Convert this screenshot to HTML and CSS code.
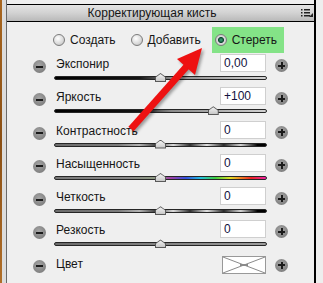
FILE: index.html
```html
<!DOCTYPE html>
<html lang="ru">
<head>
    <meta charset="UTF-8">
    <meta name="viewport" content="width=device-width, initial-scale=1.0">
    <title>Корректирующая кисть</title>
    <link rel="stylesheet" href="styles.css">
</head>
<body>
    <div class="frame">
        <div class="wood"></div>
        <div class="gutter"></div>
        <div class="panel">
            <div class="header">
                <div class="title">Корректирующая кисть</div>
                <div class="menu">
                    <svg width="12" height="8" viewBox="0 0 12 8">
                        <rect x="0" y="0" width="1.5" height="1.5" fill="#222"/>
                        <rect x="3" y="0" width="6" height="1.5" fill="#222"/>
                        <rect x="0" y="3" width="1.5" height="1.5" fill="#222"/>
                        <rect x="3" y="3" width="6" height="1.5" fill="#222"/>
                        <rect x="0" y="6" width="1.5" height="1.5" fill="#222"/>
                        <rect x="3" y="6" width="6" height="1.5" fill="#222"/>
                        <polygon points="12,4 12,8 8,8" fill="#222"/>
                    </svg>
                </div>
            </div>

            <div class="modes">
                <label class="mode"><span class="radio"></span>Создать</label>
                <label class="mode"><span class="radio"></span>Добавить</label>
                <label class="mode active"><span class="radio on"></span>Стереть</label>
            </div>

            <div class="rows">
                <div class="row">
                    <span class="round minus"></span>
                    <div class="control">
                        <div class="top"><span class="name">Экспонир</span><span class="value">0,00</span></div>
                        <div class="track tone"><span class="thumb" style="left: 50%"></span></div>
                    </div>
                    <span class="round plus"></span>
                </div>
                <div class="row">
                    <span class="round minus"></span>
                    <div class="control">
                        <div class="top"><span class="name">Яркость</span><span class="value">+100</span></div>
                        <div class="track tone"><span class="thumb" style="left: 75%"></span></div>
                    </div>
                    <span class="round plus"></span>
                </div>
                <div class="row">
                    <span class="round minus"></span>
                    <div class="control">
                        <div class="top"><span class="name">Контрастность</span><span class="value">0</span></div>
                        <div class="track bands"><span class="thumb" style="left: 50%"></span></div>
                    </div>
                    <span class="round plus"></span>
                </div>
                <div class="row">
                    <span class="round minus"></span>
                    <div class="control">
                        <div class="top"><span class="name">Насыщенность</span><span class="value">0</span></div>
                        <div class="track rainbow"><span class="thumb" style="left: 50%"></span></div>
                    </div>
                    <span class="round plus"></span>
                </div>
                <div class="row">
                    <span class="round minus"></span>
                    <div class="control">
                        <div class="top"><span class="name">Четкость</span><span class="value">0</span></div>
                        <div class="track bands"><span class="thumb" style="left: 50%"></span></div>
                    </div>
                    <span class="round plus"></span>
                </div>
                <div class="row">
                    <span class="round minus"></span>
                    <div class="control">
                        <div class="top"><span class="name">Резкость</span><span class="value">0</span></div>
                        <div class="track plain"><span class="thumb" style="left: 50%"></span></div>
                    </div>
                    <span class="round plus"></span>
                </div>
                <div class="row">
                    <span class="round minus"></span>
                    <div class="control">
                        <div class="top"><span class="name">Цвет</span>
                            <span class="swatch">
                                <svg width="44" height="18" viewBox="0 0 44 18">
                                    <rect x="0.5" y="0.5" width="43" height="17" fill="#fff" stroke="#999"/>
                                    <line x1="1" y1="1" x2="43" y2="17" stroke="#8a8a8a" stroke-width="1"/>
                                    <line x1="1" y1="17" x2="43" y2="1" stroke="#8a8a8a" stroke-width="1"/>
                                    <rect x="18" y="8" width="8" height="2" fill="#8a8a8a"/>
                                </svg>
                            </span>
                        </div>
                    </div>
                    <span class="round plus"></span>
                </div>
            </div>
        </div>
        <div class="edge"></div>
    </div>

    <svg class="arrow" width="323" height="283" viewBox="0 0 323 283">
        <line x1="131" y1="129" x2="187" y2="66" stroke="#ee1111" stroke-width="7"/>
        <polygon points="202,48 195,75 177,59" fill="#ee1111"/>
    </svg>
</body>
</html>
```

FILE: styles.css
```css
body {
    margin: 0;
    padding: 0;
    background-color: #efefef;
    font-family: "Liberation Sans", Arial, sans-serif;
    font-size: 12px;
    color: #161616;
}
.frame {
    display: flex;
    height: 283px;
}
.wood {
    width: 2px;
    background: linear-gradient(#a8661f, #8a4f14 50%, #b06e28);
}
.gutter {
    width: 4px;
    background-color: #dcdcdc;
}
.panel {
    flex: 1;
    border-left: 1px solid #6a6a6a;
    border-right: 2px solid #000;
    background-color: #efefef;
    padding-top: 4px;
}
.edge {
    width: 7px;
    background-color: #eeeeee;
}
.header {
    display: flex;
    align-items: center;
    height: 16px;
    border-top: 1px solid #000;
    border-bottom: 1px solid #000;
    background: linear-gradient(#e4e4e4, #d2d2d2 50%, #b9b9b9);
}
.title {
    flex: 1;
    text-align: center;
    line-height: 16px;
}
.menu {
    width: 17px;
    display: flex;
    padding-left: 4px;
    box-sizing: border-box;
}
.modes {
    display: flex;
    height: 32px;
    padding-top: 5px;
    padding-left: 46px;
    box-sizing: border-box;
}
.mode {
    display: flex;
    align-items: center;
    height: 26px;
    margin-right: 15px;
}
.mode.active {
    margin-left: -4px;
    padding: 0 7px 0 3px;
    background-color: #84e387;
}
.radio {
    width: 10px;
    height: 10px;
    border: 1px solid #7c7c7c;
    border-radius: 50%;
    margin-right: 5px;
    background: radial-gradient(circle at 40% 35%, #ffffff, #d8d8d8 60%, #b4b4b4);
}
.radio.on {
    background: radial-gradient(circle, #3aa87c 0, #0e4a2e 2.6px, #dadada 3.4px, #bdbdbd 100%);
}
.rows {
    padding: 0 26px;
}
.row {
    display: grid;
    grid-template-columns: 13px 1fr 13px;
    column-gap: 8px;
    height: 33.3px;
}
.round {
    position: relative;
    width: 13px;
    height: 13px;
    margin-top: 6px;
    border-radius: 50%;
    background: radial-gradient(circle at 45% 40%, #a6a6a6, #848484 65%, #6e6e6e);
}
.round.plus {
    margin-top: 5px;
}
.round::before {
    content: "";
    position: absolute;
    left: 3px;
    top: 5.5px;
    width: 7px;
    height: 2px;
    background-color: #1b1b1b;
}
.round.plus::after {
    content: "";
    position: absolute;
    left: 5.5px;
    top: 3px;
    width: 2px;
    height: 7px;
    background-color: #1b1b1b;
}
.top {
    display: flex;
    justify-content: space-between;
    align-items: flex-start;
    height: 18px;
    padding-right: 1px;
}
.name {
    padding: 3px 0 0 2px;
    line-height: 14px;
}
.value {
    width: 41px;
    height: 16px;
    padding-left: 3px;
    line-height: 17px;
    border: 1px solid #cfcfcf;
    background-color: #fff;
    color: #12123e;
}
.swatch {
    display: flex;
    margin-top: 2px;
}
.track {
    position: relative;
    height: 2px;
    margin-top: 4px;
    border: 1px solid #262626;
    border-radius: 2px;
}
.tone {
    background: linear-gradient(90deg, #000, #141414 40%, #8a8a8a 55%, #d2d2d2);
}
.bands {
    background: linear-gradient(90deg, #6c6c6c, #7c7c7c 30%, #b4b4b4 40%, #3c3c3c 48%, #dcdcdc 56%, #303030 64%, #e2e2e2 72%, #2a2a2a 80%, #d4d4d4 88%, #000 96%);
}
.rainbow {
    background: linear-gradient(90deg, #777, #8a8a8a 35%, #8e9a82 47%, #a040a8 55%, #3450e0 62%, #22c0e2 69%, #3ed040 76%, #e2e022 83%, #f28020 88%, #f02222 93%, #f022a8);
}
.plain {
    background: linear-gradient(90deg, #6a6a6a, #9c9c9c);
}
.thumb {
    position: absolute;
    top: -4px;
    width: 11px;
    height: 9px;
    margin-left: -5.5px;
    background: #5a5a5a;
    clip-path: polygon(50% 0, 100% 45%, 100% 100%, 0 100%, 0 45%);
}
.thumb::after {
    content: "";
    position: absolute;
    left: 1px;
    top: 1px;
    width: 9px;
    height: 7px;
    background: linear-gradient(#f4f4f4, #c8c8c8);
    clip-path: polygon(50% 0, 100% 45%, 100% 100%, 0 100%, 0 45%);
}
.arrow {
    position: absolute;
    top: 0;
    left: 0;
    pointer-events: none;
    filter: drop-shadow(2px 2px 1.5px rgba(0, 0, 0, 0.35));
}
```
